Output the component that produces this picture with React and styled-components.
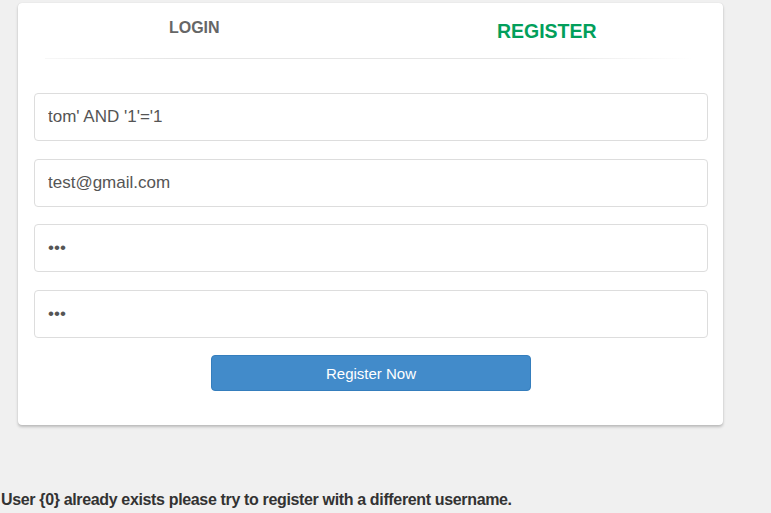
import styled, { createGlobalStyle } from "styled-components";

const GlobalStyle = createGlobalStyle`
    body {
        margin: 0;
        background-color: #f0f0f0;
        font-family: "Liberation Sans", Arial, sans-serif;
    }
`;

const Page = styled.div`
    padding: 3px 0 0 0;
    width: 771px;
    height: 513px;
    box-sizing: border-box;
    overflow: hidden;
`;

const Panel = styled.div`
    margin-left: 18px;
    width: 705px;
    background-color: #ffffff;
    border-radius: 4px;
    box-shadow: 0 2px 3px rgba(0, 0, 0, 0.22), 0 0 1px rgba(0, 0, 0, 0.15);
`;

const Tabs = styled.div`
    display: grid;
    grid-template-columns: 1fr 1fr;
    height: 55px;
`;

const Tab = styled.a`
    display: flex;
    justify-content: center;
    align-items: flex-start;
    padding-top: ${(p) => (p.$active ? "17px" : "16px")};
    font-weight: bold;
    font-size: ${(p) => (p.$active ? "19.5px" : "16px")};
    color: ${(p) => (p.$active ? "#029f5b" : "#666666")};
    text-transform: uppercase;
    cursor: pointer;
`;

const Divider = styled.hr`
    margin: 0 28px 0 27px;
    border: 0;
    height: 1px;
    background-image: linear-gradient(
        to right,
        rgba(0, 0, 0, 0.03),
        rgba(0, 0, 0, 0.1) 20%,
        rgba(0, 0, 0, 0.1) 75%,
        rgba(0, 0, 0, 0)
    );
`;

const Form = styled.form`
    display: flex;
    flex-direction: column;
    gap: 17.5px;
    padding: 34px 15px 34px 16px;
`;

const Input = styled.input`
    box-sizing: border-box;
    height: 48px;
    width: 100%;
    padding: 0 13px;
    border: 1px solid #dddddd;
    border-radius: 4px;
    font-family: "Liberation Sans", Arial, sans-serif;
    font-size: 17px;
    color: #555555;
    outline: none;
`;

const Button = styled.button`
    align-self: center;
    width: 320px;
    height: 36px;
    background-color: #428bca;
    border: 1px solid #357ebd;
    border-radius: 4px;
    color: #ffffff;
    font-family: "Liberation Sans", Arial, sans-serif;
    font-size: 15px;
    cursor: pointer;
`;

const Message = styled.div`
    margin-top: 66px;
    padding-left: 1px;
    font-weight: bold;
    font-size: 16px;
    letter-spacing: -0.35px;
    color: #333333;
`;

function App() {
    return (
        <Page>
            <GlobalStyle />
            <Panel>
                <Tabs>
                    <Tab>Login</Tab>
                    <Tab $active>Register</Tab>
                </Tabs>
                <Divider />
                <Form onSubmit={(e) => e.preventDefault()}>
                    <Input type="text" defaultValue="tom' AND '1'='1" />
                    <Input type="email" defaultValue="test@gmail.com" />
                    <Input type="password" defaultValue="123" />
                    <Input type="password" defaultValue="123" />
                    <Button type="submit">Register Now</Button>
                </Form>
            </Panel>
            <Message>User {"{0}"} already exists please try to register with a different username.</Message>
        </Page>
    );
}

export default App;
